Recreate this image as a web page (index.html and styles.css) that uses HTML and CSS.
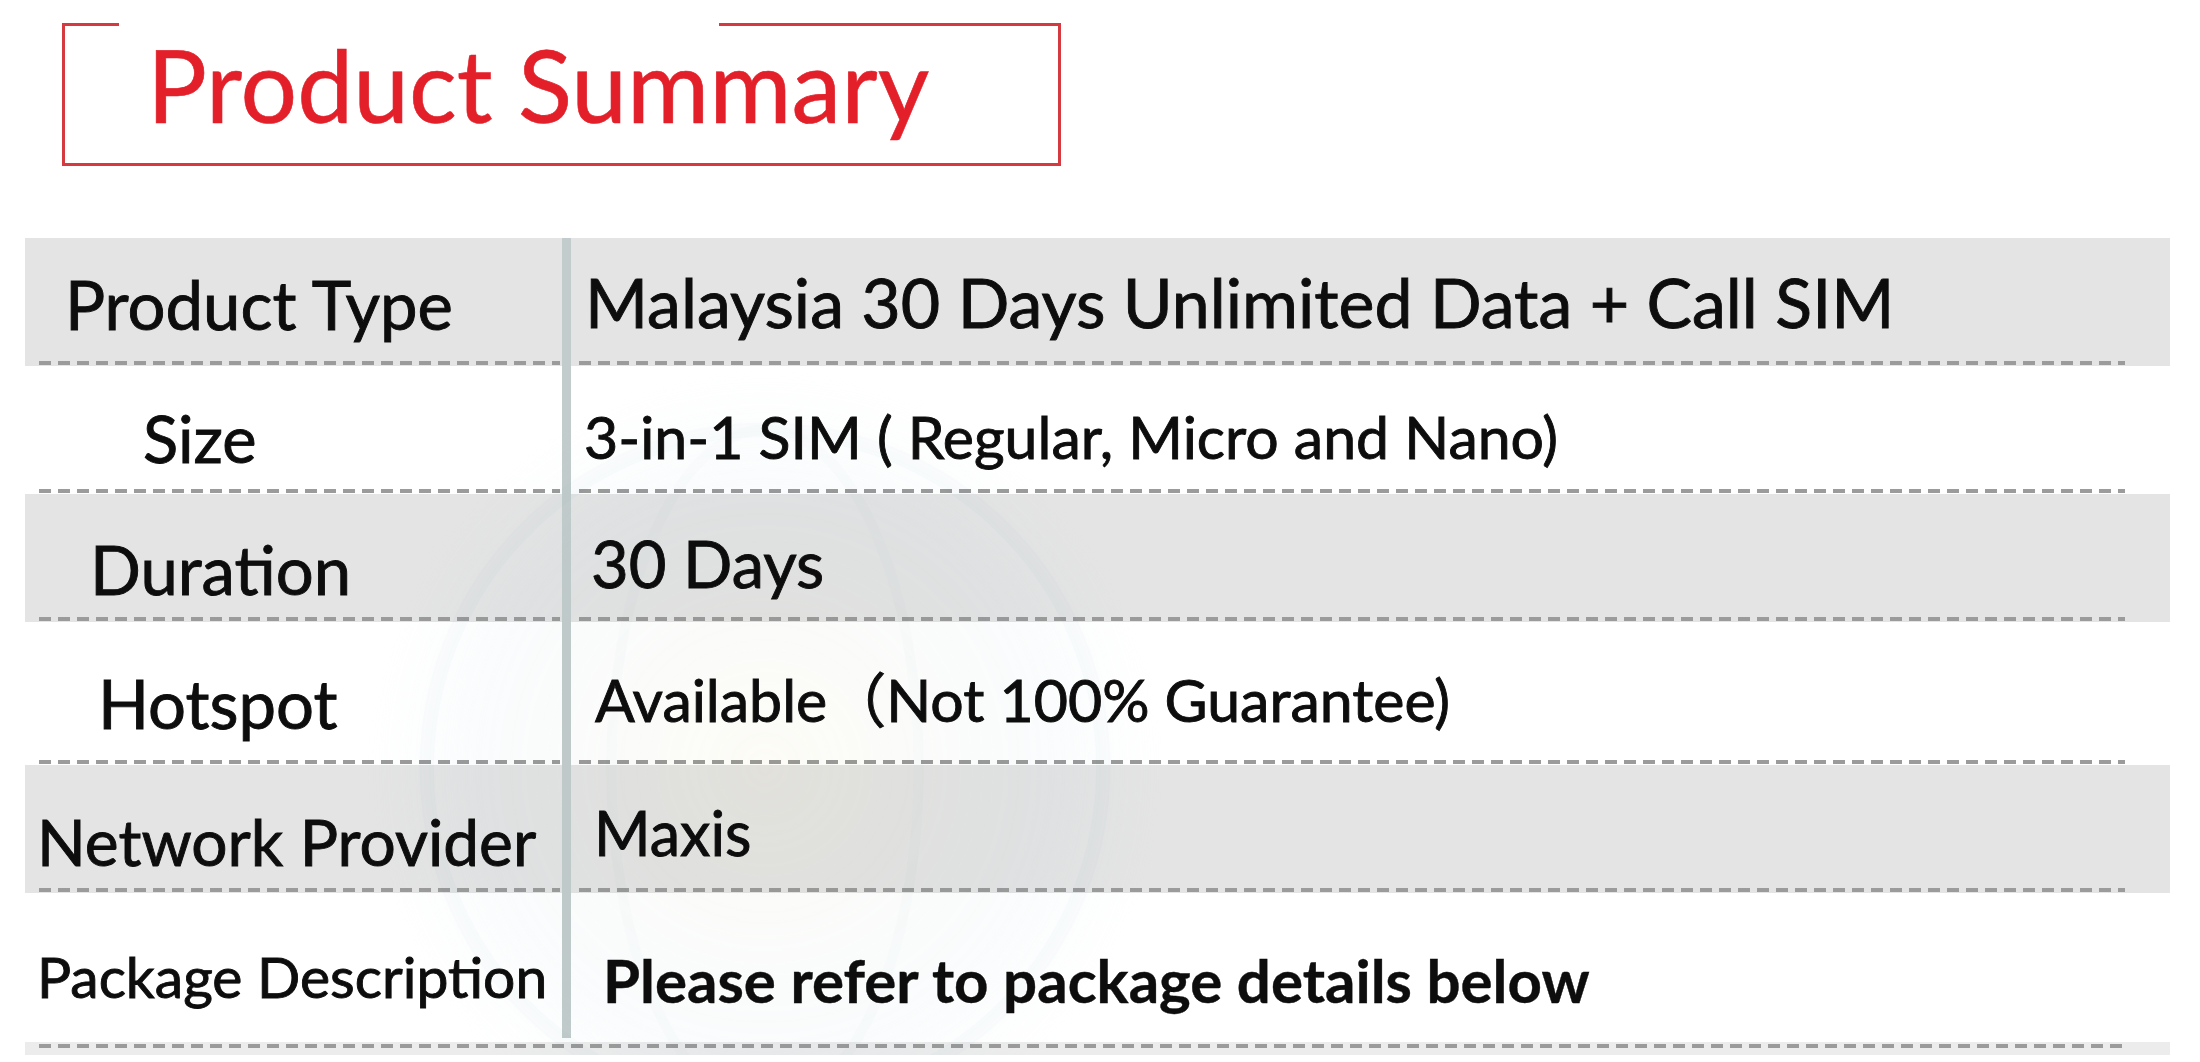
FILE: index.html
```html
<!DOCTYPE html>
<html lang="en">
<head>
<meta charset="utf-8">
<title>Product Summary</title>
<link rel="stylesheet" href="styles.css">
</head>
<body>
<header class="title-box">
  <h1 class="title">Product Summary</h1>
</header>

<section class="summary">
  <svg class="watermark" viewBox="0 0 800 800" aria-hidden="true">
    <defs>
      <radialGradient id="wm" cx="50%" cy="50%" r="50%">
        <stop offset="0%" stop-color="#f6f3dc" stop-opacity="0.6"/>
        <stop offset="70%" stop-color="#e2ecf1" stop-opacity="0.4"/>
        <stop offset="100%" stop-color="#e2ecf1" stop-opacity="0"/>
      </radialGradient>
    </defs>
    <circle cx="400" cy="400" r="390" fill="url(#wm)"/>
    <circle cx="400" cy="400" r="330" fill="none" stroke="#d3e3e8" stroke-opacity="0.25" stroke-width="14"/>
    <ellipse cx="400" cy="400" rx="150" ry="330" fill="none" stroke="#d3e3e8" stroke-opacity="0.2" stroke-width="10"/>
  </svg>

  <div class="row gray r1">
    <div class="label">Product Type</div>
    <div class="bar"></div>
    <div class="value">Malaysia 30 Days Unlimited Data + Call SIM</div>
  </div>
  <div class="row r2">
    <div class="label">Size</div>
    <div class="bar"></div>
    <div class="value">3-in-1 SIM ( Regular, Micro and Nano)</div>
  </div>
  <div class="row gray r3">
    <div class="label">Duration</div>
    <div class="bar"></div>
    <div class="value">30 Days</div>
  </div>
  <div class="row r4">
    <div class="label">Hotspot</div>
    <div class="bar"></div>
    <div class="value">Available（Not 100% Guarantee)</div>
  </div>
  <div class="row gray r5">
    <div class="label">Network Provider</div>
    <div class="bar"></div>
    <div class="value">Maxis</div>
  </div>
  <div class="row r6 last">
    <div class="label">Package Description</div>
    <div class="bar"></div>
    <div class="value strong">Please refer to package details below</div>
  </div>
  <div class="foot"></div>
</section>
</body>
</html>
```
FILE: styles.css
```css
html, body {
  margin: 0;
  padding: 0;
  background: #ffffff;
}

body {
  display: flow-root;
  width: 2200px;
  height: 1062px;
  overflow: hidden;
  font-family: Lato, "Noto Sans CJK SC", sans-serif;
  color: #0d0d0d;
}

/* ---------- title ---------- */
.title-box {
  position: relative;
  box-sizing: border-box;
  width: 999px;
  height: 143px;
  margin: 23px 0 0 62px;
  border: 3px solid #d63a41;
}

.title-box::before {
  content: "";
  position: absolute;
  top: -3px;
  left: 54px;
  width: 600px;
  height: 3px;
  background: #ffffff;
}

.title {
  margin: -2px 0 0 0;
  padding-left: 82px;
  font-family: Lato, sans-serif;
  font-weight: 400;
  font-size: 100px;
  line-height: 120px;
  color: #e3202a;
  white-space: nowrap;
  -webkit-text-stroke: 0.6px #e3202a;
}

/* ---------- table ---------- */
.summary {
  position: relative;
  overflow: hidden;
  width: 2145px;
  margin: 72px 0 0 25px;
}

.watermark {
  position: absolute;
  left: 330px;
  top: 120px;
  width: 820px;
  height: 820px;
  pointer-events: none;
  z-index: 2;
  mix-blend-mode: multiply;
  opacity: 0.45;
}

.row {
  display: grid;
  grid-template-columns: 537px 9px 1fr;
  height: var(--h);
  background-color: #ffffff;
}

.row.gray {
  background-color: #e4e4e4;
}

.label,
.value {
  box-sizing: border-box;
  white-space: nowrap;
  line-height: 1.2;
  -webkit-text-stroke: 0.9px #0d0d0d;
  background-image: repeating-linear-gradient(90deg, #9b9b9b 0 12px, transparent 12px 19px);
  background-repeat: no-repeat;
}

.label {
  font-size: var(--lf);
  padding-top: calc(var(--lb) - 0.987 * var(--lf));
  padding-left: var(--li);
  background-size: calc(100% - 16px) 4px;
  background-position: 14px calc(100% - 1px);
}

.value {
  font-size: var(--vf);
  padding-top: calc(var(--vb) - 0.987 * var(--vf));
  padding-left: var(--vi);
  background-size: calc(100% - 53px) 4px;
  background-position: 8px calc(100% - 1px);
}

.value.strong {
  font-weight: 700;
  -webkit-text-stroke: 0.4px #0d0d0d;
}

.bar {
  background: #c3cccc;
}

.row.last .label,
.row.last .value {
  background-image: none;
}

.row.last .bar {
  margin-bottom: 4px;
}

.foot {
  height: 13px;
  background-color: #ececec;
  background-image: repeating-linear-gradient(90deg, #9b9b9b 0 12px, transparent 12px 19px);
  background-repeat: no-repeat;
  background-size: calc(100% - 59px) 4px;
  background-position: 14px 2px;
}

/* per-row metrics */
.r1 { --h: 128px; --lf: 67px; --lb: 92px;  --li: 40px;  --vf: 68px; --vb: 90px;  --vi: 14px; }
.r2 { --h: 128px; --lf: 65px; --lb: 97px;  --li: 118px; --vf: 59px; --vb: 94px;  --vi: 13px; }
.r3 { --h: 128px; --lf: 67px; --lb: 101px; --li: 65px;  --vf: 65px; --vb: 94px;  --vi: 20px; }
.r4 { --h: 143px; --lf: 67px; --lb: 107px; --li: 73px;  --vf: 59px; --vb: 101px; --vi: 24px; }
.r5 { --h: 128px; --lf: 64px; --lb: 102px; --li: 12px;  --vf: 61px; --vb: 91px;  --vi: 23px; }
.r6 { --h: 149px; --lf: 57px; --lb: 105px; --li: 12px;  --vf: 60px; --vb: 110px; --vi: 32px; }
```
